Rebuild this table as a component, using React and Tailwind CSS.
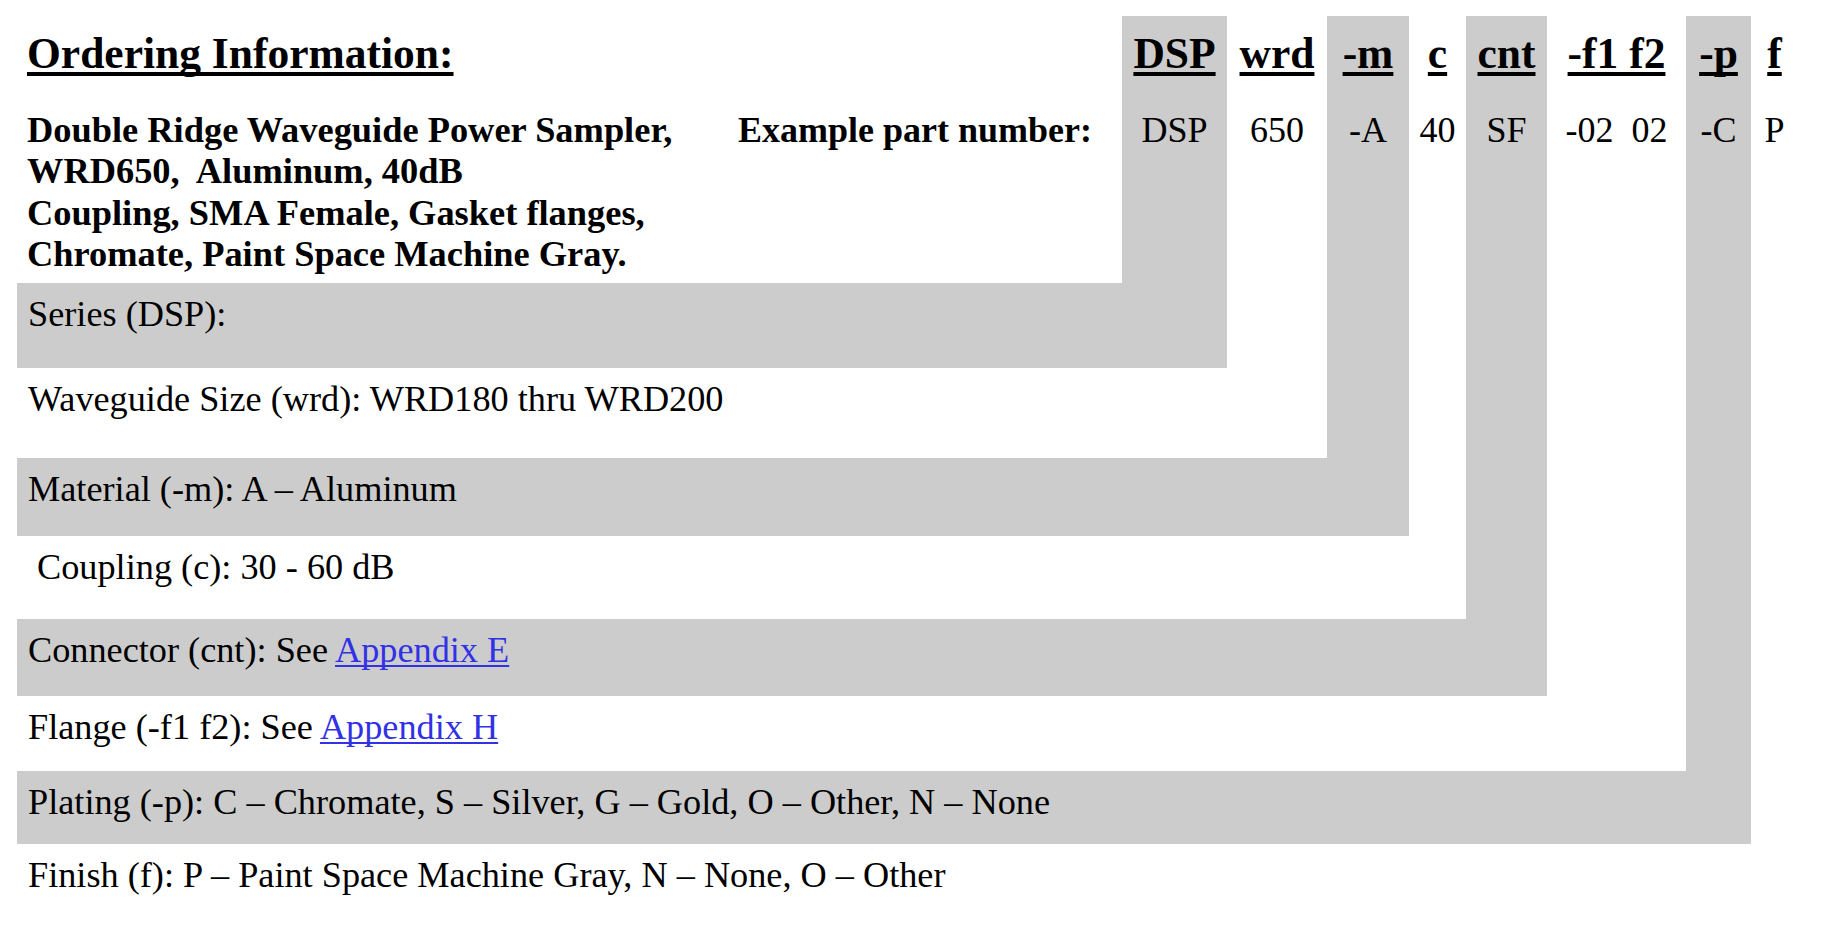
import React from "react";

const serif = "font-['Liberation_Serif','Times_New_Roman',serif]";

function Head({ children }) {
  return (
    <div className="text-[43.5px] leading-[50px] font-bold underline decoration-[4px] underline-offset-[4px] [text-decoration-skip-ink:none] whitespace-pre">
      {children}
    </div>
  );
}

function Val({ children }) {
  return <div className="mt-[32px] text-[36px] leading-[41px] whitespace-pre">{children}</div>;
}

function Link({ children }) {
  return (
    <span className="text-[#3131e6] underline decoration-2 underline-offset-[3px] [text-decoration-skip-ink:none]">
      {children}
    </span>
  );
}

export default function App() {
  const rowText = "pl-[11px] pt-[11px] text-[36.25px] leading-[41px] whitespace-pre";
  return (
    <div className={`${serif} bg-white text-black min-h-[933px] w-[1821px] pt-[16px] pl-[17px]`}>
      <div className="grid grid-cols-[1105px_105px_100px_82px_57px_81px_139px_65px_47px] grid-rows-[267px_85px_90px_78px_83px_77px_75px_73px_70px]">
        {/* top-left cell */}
        <div className="col-start-1 row-start-1 pl-[10px] pt-[12px]">
          <Head>Ordering Information:</Head>
          <div className="mt-[32px] flex font-bold leading-[41.4px]">
            <div className="w-[711px] whitespace-pre text-[36.4px]">
              Double Ridge Waveguide Power Sampler,
              <br />
              WRD650,  Aluminum, 40dB
              <br />
              Coupling, SMA Female, Gasket flanges,
              <br />
              Chromate, Paint Space Machine Gray.
            </div>
            <div className="text-[36px]">Example part number:</div>
          </div>
        </div>

        {/* code columns */}
        <div className="col-start-2 row-start-1 row-span-1 bg-[#cccccc] flex flex-col items-center pt-[12px]">
          <Head>DSP</Head>
          <Val>DSP</Val>
        </div>
        <div className="col-start-3 row-start-1 row-span-2 bg-white flex flex-col items-center pt-[12px]">
          <Head>wrd</Head>
          <Val>650</Val>
        </div>
        <div className="col-start-4 row-start-1 row-span-3 bg-[#cccccc] flex flex-col items-center pt-[12px]">
          <Head>-m</Head>
          <Val>-A</Val>
        </div>
        <div className="col-start-5 row-start-1 row-span-4 bg-white flex flex-col items-center pt-[12px]">
          <Head>c</Head>
          <Val>40</Val>
        </div>
        <div className="col-start-6 row-start-1 row-span-5 bg-[#cccccc] flex flex-col items-center pt-[12px]">
          <Head>cnt</Head>
          <Val>SF</Val>
        </div>
        <div className="col-start-7 row-start-1 row-span-6 bg-white flex flex-col items-center pt-[12px]">
          <Head>-f1 f2</Head>
          <Val>-02  02</Val>
        </div>
        <div className="col-start-8 row-start-1 row-span-7 bg-[#cccccc] flex flex-col items-center pt-[12px]">
          <Head>-p</Head>
          <Val>-C</Val>
        </div>
        <div className="col-start-9 row-start-1 row-span-8 bg-white flex flex-col items-center pt-[12px]">
          <Head>f</Head>
          <Val>P</Val>
        </div>

        {/* description rows */}
        <div className={`col-start-1 col-span-2 row-start-2 bg-[#cccccc] ${rowText}`}>Series (DSP):</div>
        <div className={`col-start-1 col-span-3 row-start-3 bg-white ${rowText}`}>
          Waveguide Size (wrd): WRD180 thru WRD200
        </div>
        <div className={`col-start-1 col-span-4 row-start-4 bg-[#cccccc] ${rowText}`}>
          Material (-m): A – Aluminum
        </div>
        <div className={`col-start-1 col-span-5 row-start-5 bg-white ${rowText}`}>
          {" Coupling (c): 30 - 60 dB"}
        </div>
        <div className={`col-start-1 col-span-6 row-start-6 bg-[#cccccc] ${rowText}`}>
          Connector (cnt): See <Link>Appendix E</Link>
        </div>
        <div className={`col-start-1 col-span-7 row-start-7 bg-white ${rowText}`}>
          Flange (-f1 f2): See <Link>Appendix H</Link>
        </div>
        <div className={`col-start-1 col-span-8 row-start-8 bg-[#cccccc] ${rowText}`}>
          Plating (-p): C – Chromate, S – Silver, G – Gold, O – Other, N – None
        </div>
        <div className={`col-start-1 col-span-9 row-start-9 bg-white ${rowText}`}>
          Finish (f): P – Paint Space Machine Gray, N – None, O – Other
        </div>
      </div>
    </div>
  );
}
